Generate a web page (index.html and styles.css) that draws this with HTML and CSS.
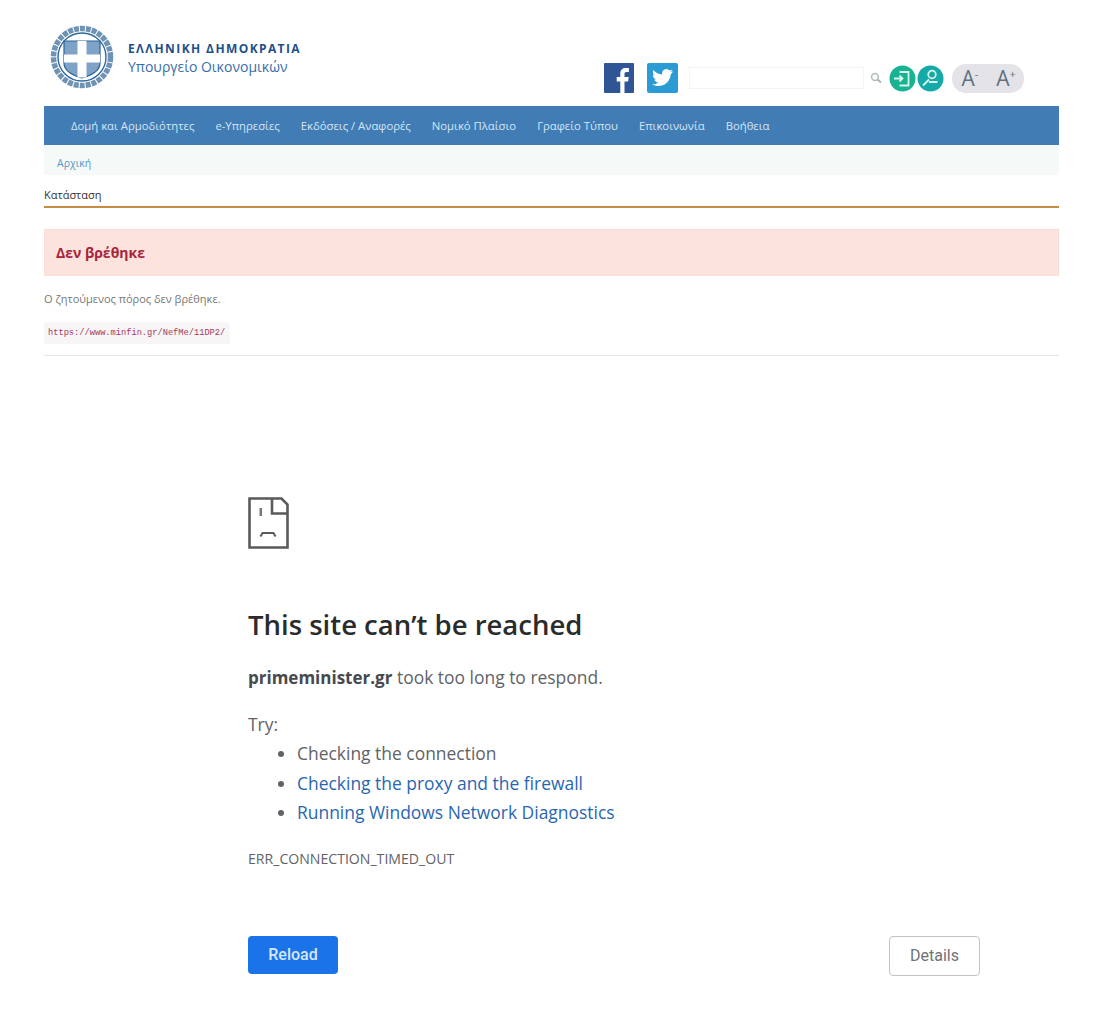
FILE: index.html
```html
<!DOCTYPE html>
<html lang="el">
<head>
    <meta charset="UTF-8">
    <meta name="viewport" content="width=device-width, initial-scale=1.0">
    <title>Υπουργείο Οικονομικών</title>
    <link rel="stylesheet" href="styles.css">
</head>
<body>

<!-- Site page -->
<div class="site">
    <header class="site-header">
        <div class="brand">
            <svg class="emblem" width="66" height="66" viewBox="0 0 66 66">
                <circle cx="33" cy="32" r="28.500" fill="none" stroke="#6f93b4" stroke-width="5.500" stroke-dasharray="5 1"/>
                <circle cx="33" cy="32" r="24" fill="#fff" stroke="#2f6a9f" stroke-width="1.400"/>
                <path d="M15 16h36v22q0 10-18 15q-18-5-18-15z" fill="#7fa3c6" stroke="#2d6298" stroke-width="1.200"/>
                <path d="M28.500 16h9v13.500h13.500v8h-13.500v15h-9v-15h-13.500v-8h13.500z" fill="#fff"/>
            </svg>
            <div class="brand-text">
                <div class="brand-title">ΕΛΛΗΝΙΚΗ ΔΗΜΟΚΡΑΤΙΑ</div>
                <div class="brand-sub">Υπουργείο Οικονομικών</div>
            </div>
        </div>
        <div class="tools">
            <svg class="social" width="30" height="30" viewBox="0 0 30 30">
                <rect width="30" height="30" rx="1" fill="#2f5597"/>
                <path d="M20.500 30V18.500h3.600l.6-4.500h-4.200v-2.800c0-1.300.4-2.100 2.200-2.100h2.200V5.100c-.4-.1-1.700-.2-3.200-.2-3.200 0-5.400 2-5.400 5.500V14h-3.600v4.500h3.600V30z" fill="#fff"/>
            </svg>
            <svg class="social social-tw" width="31" height="30" viewBox="0 0 31 30">
                <rect width="31" height="30" rx="2" fill="#2b9bd3"/>
                <path d="M26 8.200c-.8.400-1.600.6-2.500.7.900-.5 1.600-1.400 1.900-2.400-.8.500-1.800.9-2.700 1a4.300 4.300 0 0 0-7.400 3.900C11.700 11.200 8.500 9.500 6.400 6.900c-1.100 2-.6 4.400 1.300 5.700-.7 0-1.400-.2-1.900-.5 0 2 1.400 3.800 3.400 4.300-.6.200-1.300.2-1.900.1.500 1.700 2.100 2.900 4 3-1.800 1.400-4.100 2-6.300 1.800 6.500 4.100 17.800 1.400 18.800-10.200.9-.6 1.600-1.400 2.200-2.900z" fill="#fff"/>
            </svg>
            <input class="search-input" type="text">
            <svg class="search-icon" width="12" height="12" viewBox="0 0 12 12">
                <circle cx="5" cy="5" r="3.400" fill="none" stroke="#b4babd" stroke-width="1.500"/>
                <path d="M7.500 7.500l3.500 3" stroke="#a9b0b3" stroke-width="2"/>
            </svg>
            <svg class="round-icon" width="27" height="27" viewBox="0 0 27 27">
                <circle cx="13.500" cy="13.500" r="13" fill="#17b392"/>
                <path d="M10.500 7h9v13.500h-9M5 13.500h8.500M10.500 10.500l3 3-3 3" fill="none" stroke="#d9f6ee" stroke-width="1.800"/>
            </svg>
            <svg class="round-icon round-user" width="27" height="27" viewBox="0 0 27 27">
                <circle cx="13.500" cy="13.500" r="13" fill="#15a9a8"/>
                <circle cx="15" cy="9.500" r="3.800" fill="none" stroke="#d9f6ee" stroke-width="1.800"/>
                <path d="M6 20.500l6-6M12 17h8.500" fill="none" stroke="#d9f6ee" stroke-width="1.800"/>
            </svg>
            <div class="font-size">
                <span class="font-btn">A<sup>-</sup></span>
                <span class="font-btn">A<sup>+</sup></span>
            </div>
        </div>
    </header>

    <nav class="main-nav">
        <a href="#">Δομή και Αρμοδιότητες</a>
        <a href="#">e-Υπηρεσίες</a>
        <a href="#">Εκδόσεις / Αναφορές</a>
        <a href="#">Νομικό Πλαίσιο</a>
        <a href="#">Γραφείο Τύπου</a>
        <a href="#">Επικοινωνία</a>
        <a href="#">Βοήθεια</a>
    </nav>

    <div class="breadcrumb"><a href="#">Αρχική</a></div>
    <div class="page-title">Κατάσταση</div>

    <div class="alert">Δεν βρέθηκε</div>
    <p class="message">Ο ζητούμενος πόρος δεν βρέθηκε.</p>
    <code class="url">https://www.minfin.gr/NefMe/11DP2/</code>
    <hr class="divider">
</div>

<!-- Browser error page -->
<div class="error-page">
    <svg class="sad-tab" width="41" height="52" viewBox="0 0 41 52">
        <path d="M1.500 1.500h32l6 6v43h-38z" fill="none" stroke="#5a5a5a" stroke-width="2.600"/>
        <path d="M24 2v14.500h15" fill="none" stroke="#5a5a5a" stroke-width="2.600"/>
        <rect x="11.500" y="11" width="2.500" height="8" fill="#777"/>
        <path d="M12.500 39.500l2-3.500h11l2 3.500" fill="none" stroke="#5a5a5a" stroke-width="2"/>
    </svg>
    <h1>This site can’t be reached</h1>
    <p class="summary"><strong>primeminister.gr</strong> took too long to respond.</p>
    <p class="try">Try:</p>
    <ul class="suggestions">
        <li>Checking the connection</li>
        <li><a href="#">Checking the proxy and the firewall</a></li>
        <li><a href="#">Running Windows Network Diagnostics</a></li>
    </ul>
    <div class="error-code">ERR_CONNECTION_TIMED_OUT</div>
    <div class="buttons">
        <button class="reload-btn">Reload</button>
        <button class="details-btn">Details</button>
    </div>
</div>

</body>
</html>
```

FILE: styles.css
```css
/* Global */
body {
    margin: 0;
    background: #fff;
    font-family: 'Open Sans', sans-serif;
    color: #333;
}

a {
    text-decoration: none;
}

/* Site page */
.site {
    margin: 0 40px 0 44px;
}

.site-header {
    display: flex;
    justify-content: space-between;
    height: 106px;
}

.brand {
    display: flex;
    align-items: flex-start;
    padding: 25px 0 0 5px;
}

.brand-text {
    margin: 16px 0 0 13px;
}

.brand-title {
    font-size: 12px;
    font-weight: 700;
    line-height: 16px;
    letter-spacing: 1.400px;
    color: #1f4f8a;
}

.brand-sub {
    font-size: 14px;
    line-height: 20px;
    color: #3a6ea5;
}

.tools {
    display: flex;
    align-items: center;
    height: 30px;
    margin: 63px 35px 0 0;
}

.social-tw {
    margin-left: 13px;
}

.search-input {
    width: 173px;
    height: 20px;
    margin-left: 11px;
    padding: 0;
    border: 1px solid #f3f4f4;
    background: #fff;
}

.search-icon {
    margin-left: 6px;
}

.round-icon {
    margin-left: 7px;
}

.round-user {
    margin-left: 1px;
}

.font-size {
    display: flex;
    margin-left: 8px;
    height: 29px;
    background: #e4e3e8;
    border-radius: 14px;
}

.font-btn {
    width: 36px;
    text-align: center;
    font-size: 21px;
    line-height: 29px;
    color: #5f7080;
}

.font-btn sup {
    font-size: 11px;
    line-height: 0;
}

.main-nav {
    display: flex;
    gap: 21px;
    height: 39px;
    padding-left: 27px;
    background: #417cb5;
    align-items: center;
}

.main-nav a {
    font-size: 11.300px;
    color: #d4e6f5;
}

.breadcrumb {
    height: 30px;
    padding-left: 13px;
    background: #f5faf8;
    font-size: 10.500px;
    line-height: 36px;
}

.breadcrumb a {
    color: #5b96c4;
}

.page-title {
    height: 31px;
    border-bottom: 2px solid #c98a43;
    font-size: 11px;
    line-height: 40px;
    color: #333;
}

.alert {
    height: 45px;
    margin-top: 21px;
    padding-left: 11px;
    border: 1px solid #f8e0da;
    background: #fde3dd;
    box-sizing: content-box;
    font-size: 14px;
    font-weight: 700;
    line-height: 45px;
    color: #a9243a;
}

.message {
    margin: 16px 0 0;
    font-size: 11px;
    line-height: 14px;
    color: #777;
}

.url {
    display: inline-block;
    margin-top: 16px;
    padding: 0 5px 0 4px;
    background: #f8f5f6;
    border-radius: 3px;
    font-family: 'Liberation Mono', monospace;
    font-size: 8.700px;
    line-height: 22px;
    color: #a5395f;
}

.divider {
    height: 1px;
    margin: 11px 0 0;
    border: 0;
    background: #e4e6e6;
}

/* Browser error page */
.error-page {
    width: 732px;
    margin: 141px 0 0 248px;
    font-family: 'Open Sans', sans-serif;
    font-size: 17.450px;
    color: #5f6368;
}

.sad-tab {
    display: block;
}

h1 {
    margin: 58px 0 0;
    font-size: 27.500px;
    font-weight: 600;
    line-height: 36px;
    color: #2a2b2d;
}

.summary {
    margin: 22px 0 0;
    line-height: 24px;
}

.summary strong {
    font-size: 17px;
    color: #48494c;
}

.try {
    margin: 22px 0 0;
    line-height: 24px;
}

.suggestions {
    margin: 3px 0 0;
    padding-left: 49px;
    line-height: 29.500px;
}

.suggestions a {
    color: #2a66b0;
}

.error-code {
    margin-top: 21px;
    font-size: 14.100px;
    line-height: 20px;
}

.buttons {
    display: flex;
    justify-content: space-between;
    align-items: flex-start;
    margin-top: 67px;
}

button {
    font-family: 'Roboto', sans-serif;
    font-size: 16px;
    border-radius: 4px;
}

.reload-btn {
    width: 90px;
    height: 38px;
    border: 0;
    background: #1a73e8;
    color: #d7e7fb;
    font-weight: 500;
}

.details-btn {
    width: 91px;
    height: 40px;
    border: 1px solid #c3c3c3;
    background: #fff;
    color: #6f7276;
}
```
